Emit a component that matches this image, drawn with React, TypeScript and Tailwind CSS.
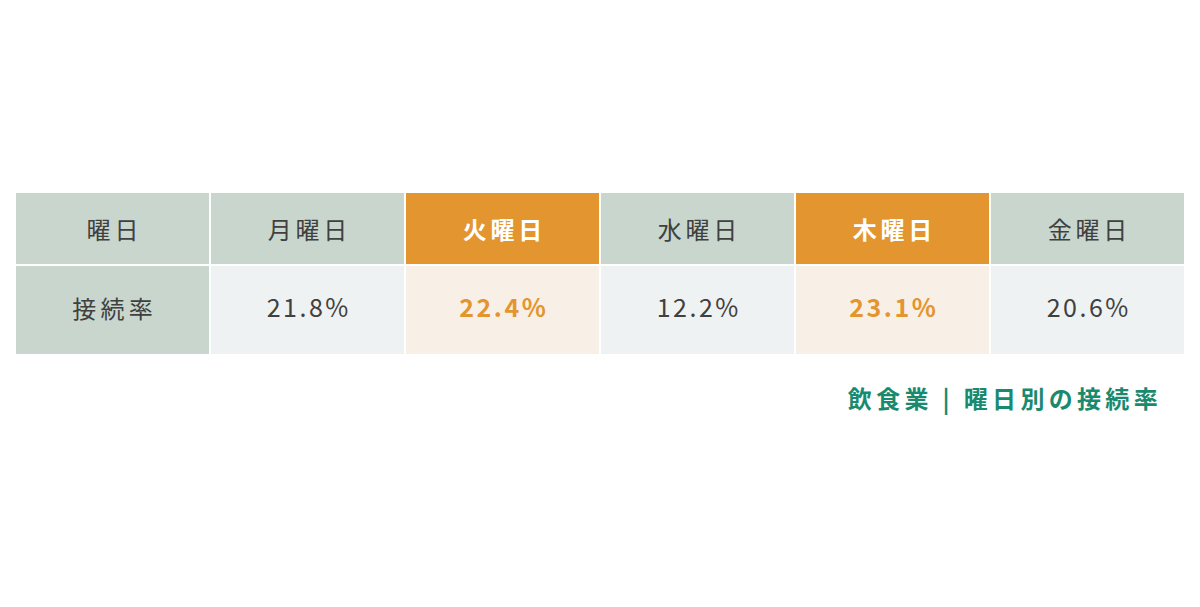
import React from "react";

const headers = [
  { t: "曜日", hl: false },
  { t: "月曜日", hl: false },
  { t: "火曜日", hl: true },
  { t: "水曜日", hl: false },
  { t: "木曜日", hl: true },
  { t: "金曜日", hl: false },
];
const values = [
  { t: "接続率", hl: false, first: true },
  { t: "21.8%", hl: false },
  { t: "22.4%", hl: true },
  { t: "12.2%", hl: false },
  { t: "23.1%", hl: true },
  { t: "20.6%", hl: false },
];

export default function App() {
  return (
    <div
      className="w-[1200px] h-[607px] bg-white"
      style={{ fontFamily: '"Noto Sans CJK JP", "Noto Sans", sans-serif' }}
    >
      <div className="pt-[193px] pl-[16px] w-[1184px]">
        <div className="grid grid-cols-6 gap-[2px]">
          {headers.map((h, i) => (
            <div
              key={i}
              className={
                h.hl
                  ? "h-[71px] flex items-center justify-center bg-[#e3952f] text-white font-bold text-[24px] tracking-[0.16em] pl-[0.16em]"
                  : "h-[71px] flex items-center justify-center bg-[#c8d6cd] text-[#404040] text-[24px] tracking-[0.16em] pl-[0.16em]"
              }
            >
              {h.t}
            </div>
          ))}
          {values.map((v, i) => (
            <div
              key={i}
              className={
                v.first
                  ? "h-[88px] flex items-center justify-center pb-[4px] bg-[#c8d6cd] text-[#404040] text-[24px] tracking-[0.18em] pl-[0.18em]"
                  : v.hl
                  ? "h-[88px] flex items-center justify-center pb-[6px] bg-[#f8efe6] text-[#e3952f] font-bold text-[25px] tracking-[0.1em] pl-[0.1em]"
                  : "h-[88px] flex items-center justify-center pb-[6px] bg-[#eef2f2] text-[#404040] text-[25px] tracking-[0.1em] pl-[0.1em]"
              }
            >
              {v.t}
            </div>
          ))}
        </div>
        <div className="mt-[26px] pr-[22px] flex justify-end text-[#1a8a6f] font-bold text-[24px] tracking-[0.18em]">
          飲食業 | 曜日別の接続率
        </div>
      </div>
    </div>
  );
}
